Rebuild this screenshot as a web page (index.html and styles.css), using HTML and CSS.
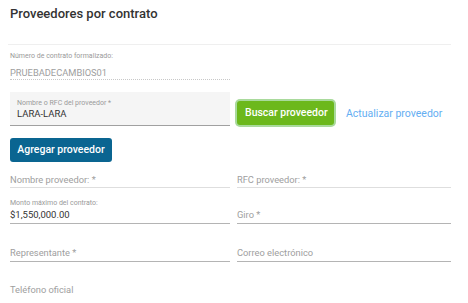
FILE: index.html
```html
<!DOCTYPE html>
<html lang="es">
<head>
<meta charset="utf-8">
<title>Proveedores por contrato</title>
<link rel="stylesheet" href="styles.css">
</head>
<body>
<div class="page">
  <h1 class="title">Proveedores por contrato</h1>
  <div class="divider"></div>

  <div class="field-contract">
    <div class="small-label">Número de contrato formalizado:</div>
    <div class="disabled-value">PRUEBADECAMBIOS01</div>
  </div>

  <div class="search-row">
    <div class="filled-field">
      <div class="small-label">Nombre o RFC del proveedor *</div>
      <div class="value">LARA-LARA</div>
    </div>
    <div class="actions">
      <button class="btn btn-green">Buscar proveedor</button>
      <a class="link">Actualizar proveedor</a>
    </div>
  </div>

  <button class="btn btn-blue">Agregar proveedor</button>

  <div class="grid">
    <div class="field row-a light"><span class="placeholder">Nombre proveedor: *</span></div>
    <div class="field row-a light"><span class="placeholder">RFC proveedor: *</span></div>

    <div class="field row-b">
      <span class="small-label">Monto máximo del contrato:</span>
      <span class="value">$1,550,000.00</span>
    </div>
    <div class="field row-b"><span class="placeholder">Giro *</span></div>

    <div class="field row-c"><span class="placeholder">Representante *</span></div>
    <div class="field row-c"><span class="placeholder">Correo electrónico</span></div>

    <div class="field row-d none"><span class="placeholder">Teléfono oficial</span></div>
  </div>
</div>
</body>
</html>
```

FILE: styles.css
```css
html, body {
  margin: 0;
  padding: 0;
  background: #ffffff;
}
body {
  font-family: Roboto, "Liberation Sans", Arial, sans-serif;
  color: #333333;
  overflow: hidden;
}
.page {
  padding: 0 17px 0 10px;
}
.title {
  margin: 5px 0 0;
  font-size: 13px;
  line-height: 18px;
  font-weight: 500;
  color: #333333;
}
.divider {
  margin: 21px 0 0 -2px;
  height: 1px;
  background: #efefef;
}
.small-label {
  display: block;
  font-size: 7px;
  line-height: 9px;
  color: #9a9a9a;
}
.value {
  display: block;
  font-size: 9.5px;
  line-height: 12px;
  color: #333333;
}
.field-contract {
  width: 220px;
  padding-top: 7px;
  border-bottom: 1px dotted #c8c8c8;
}
.disabled-value {
  margin-top: 6px;
  font-size: 9.3px;
  line-height: 12px;
  color: #9e9e9e;
}
.search-row {
  display: flex;
  align-items: flex-start;
  margin-top: 12px;
}
.filled-field {
  width: 213px;
  flex: none;
  padding: 7px 0 5px 7px;
  background: #f5f5f5;
  border-bottom: 1px solid #a0a0a0;
}
.actions {
  display: flex;
  align-items: center;
  margin: 9px 0 0 5px;
  white-space: nowrap;
}
.btn {
  font-family: Roboto, "Liberation Sans", Arial, sans-serif;
  font-size: 10.5px;
  line-height: 14px;
  font-weight: 500;
  color: #ffffff;
  border-radius: 3px;
  cursor: pointer;
  white-space: nowrap;
}
.btn-green {
  background: #6cb81c;
  border: none;
  padding: 0 8px;
  height: 24px;
  width: 97px;
  box-shadow: 0 0 0 2px #a9da9c;
  margin-left: 2px;
}
.link {
  margin-left: 12px;
  font-size: 10.5px;
  color: #64aef2;
}
.btn-blue {
  display: block;
  margin-top: 12px;
  background: #0a6591;
  border: none;
  height: 24px;
  width: 102px;
  padding: 0;
}
.grid {
  display: grid;
  grid-template-columns: 220px 214px;
  column-gap: 7px;
  grid-template-rows: 26px 36px 38px 40px;
}
.field {
  display: flex;
  flex-direction: column;
  justify-content: flex-end;
  padding-bottom: 2px;
  border-bottom: 1px solid #b4b4b4;
}
.field.light {
  border-bottom-color: #dedede;
  padding-bottom: 1px;
}
.field.none {
  border-bottom: none;
  justify-content: flex-start;
  padding-top: 22px;
}
.placeholder {
  font-size: 9.3px;
  line-height: 12px;
  color: #9e9e9e;
}
.row-b .small-label {
  margin-bottom: 1px;
}
```
